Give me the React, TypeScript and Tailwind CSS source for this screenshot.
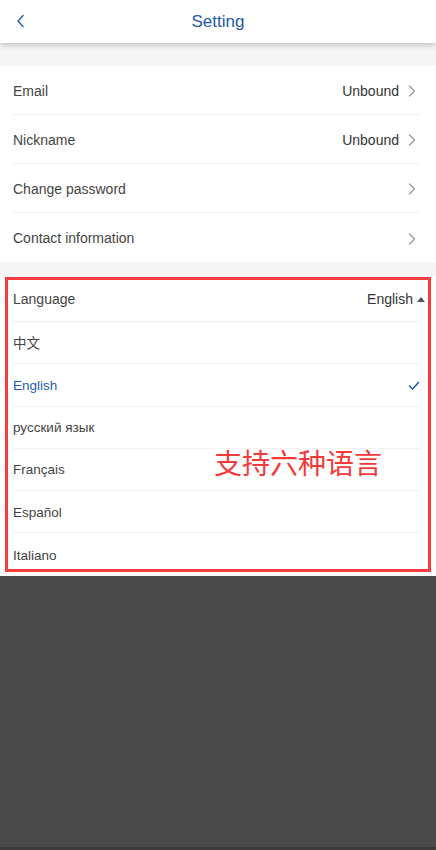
import React from 'react';

//--------------------------------------------DATA------------------------------------------------

const accountRows = [
  { label: 'Email', value: 'Unbound' },
  { label: 'Nickname', value: 'Unbound' },
  { label: 'Change password', value: '' },
  { label: 'Contact information', value: '' },
];

const languages = ['中文', 'English', 'русский язык', 'Français', 'Español', 'Italiano'];

const font = { fontFamily: '"Liberation Sans", Arial, "Noto Sans CJK SC", sans-serif' };

//--------------------------------------------ICONS------------------------------------------------

function ChevronRight() {
  return (
    <svg width="8" height="14" viewBox="0 0 8 14" fill="none" className="shrink-0">
      <polyline points="1.5,2 6.5,7 1.5,12" stroke="#9a9a9a" strokeWidth="1.3" strokeLinecap="round" strokeLinejoin="round" />
    </svg>
  );
}

function ChevronLeft() {
  return (
    <svg width="10" height="14" viewBox="0 0 10 14" fill="none">
      <polyline points="7,1.5 2,7 7,12.5" stroke="#2a62ad" strokeWidth="1.5" strokeLinecap="round" strokeLinejoin="round" />
    </svg>
  );
}

function Check() {
  return (
    <svg width="12" height="10" viewBox="0 0 12 10" fill="none">
      <polyline points="1.5,5 4.5,8 10.5,1.5" stroke="#1f5eb0" strokeWidth="1.6" strokeLinecap="round" strokeLinejoin="round" />
    </svg>
  );
}

//--------------------------------------------COMPOSANT------------------------------------------------

export default function App() {
  return (
    <div className="min-h-[850px] flex flex-col bg-[#4a4a4a]" style={font}>
      <header className="relative z-10 h-[43px] bg-white shadow-[0_2px_6px_rgba(0,0,0,0.22)] flex items-center justify-center">
        <div className="absolute left-[16px] top-[14px]">
          <ChevronLeft />
        </div>
        <h1 className="text-[17px] text-[#1f5aa6]">Setting</h1>
      </header>

      <div className="h-[23px] bg-[#f5f5f5]" />

      <section className="bg-white">
        {accountRows.map((row, i) => (
          <div
            key={row.label}
            className={`ml-[13px] mr-[16px] h-[49px] pt-[2px] flex items-center justify-between ${
              i < accountRows.length - 1 ? 'border-b border-[#f1f1f1]' : ''
            }`}
          >
            <span className="text-[14px] text-[#444]">{row.label}</span>
            <div className="flex items-center gap-[9px] mr-[4px]">
              {row.value && <span className="text-[14px] text-[#333]">{row.value}</span>}
              <ChevronRight />
            </div>
          </div>
        ))}
      </section>

      <div className="h-[14px] bg-[#f5f5f5]" />

      <section className="relative bg-white">
        <div className="ml-[13px] mr-[16px] h-[46px] pt-[1px] flex items-center justify-between border-b border-[#f1f1f1]">
          <span className="text-[14px] text-[#444]">Language</span>
          <div className="flex items-center gap-[4px] -mr-[5px]">
            <span className="text-[14px] text-[#333]">English</span>
            <svg width="8" height="5" viewBox="0 0 8 5">
              <polygon points="0,5 4,0 8,5" fill="#555" />
            </svg>
          </div>
        </div>
        {languages.map((lang, i) => (
          <div
            key={lang}
            className={`ml-[13px] mr-[16px] h-[42.3px] pt-[2px] flex items-center justify-between ${
              i < languages.length - 1 ? 'border-b border-[#f3f3f3]' : ''
            }`}
          >
            <span className={`text-[13.5px] ${lang === 'English' ? 'text-[#1f5eb0]' : 'text-[#444]'}`}>{lang}</span>
            {lang === 'English' && <Check />}
          </div>
        ))}

        {/* annotation overlay */}
        <div className="absolute left-[5px] right-[5px] top-[1px] bottom-[4px] border-[3px] border-[#f53b3b] pointer-events-none" />
        <div
          className="absolute left-[214px] top-[169px] text-[28px] leading-[34px] text-[#f23a3a] pointer-events-none"
          style={{ fontFamily: '"Noto Sans CJK SC", sans-serif' }}
        >
          支持六种语言
        </div>
      </section>

      <div className="flex-1" />
      <div className="h-[3px] bg-[#3b3b3b]" />
    </div>
  );
}
